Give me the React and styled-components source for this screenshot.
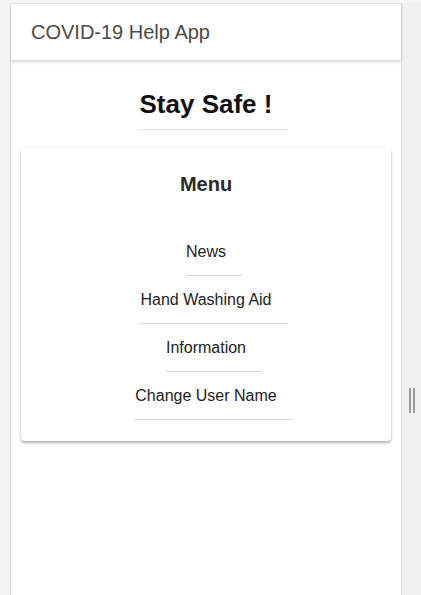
import React from 'react';
import styled, { createGlobalStyle } from 'styled-components';

const menuItems = ['News', 'Hand Washing Aid', 'Information', 'Change User Name'];

function App() {
  return (
    <>
      <GlobalStyle />
      <Page>
        <Gutter />
        <Phone>
          <Header>COVID-19 Help App</Header>
          <Main>
            <Title>Stay Safe !</Title>
            <Card>
              <CardTitle>Menu</CardTitle>
              <MenuList>
                {menuItems.map((item) => (
                  <MenuItem key={item}>{item}</MenuItem>
                ))}
              </MenuList>
            </Card>
          </Main>
        </Phone>
        <Resizer>
          <Handle>
            <Bar />
            <Bar />
          </Handle>
        </Resizer>
      </Page>
    </>
  );
}

export default App;

const GlobalStyle = createGlobalStyle`
  html, body {
    margin: 0;
    padding: 0;
    height: 100%;
    overflow: hidden;
  }

  body {
    font-family: 'Liberation Sans', Arial, sans-serif;
    background: #f5f5f5;
  }

  #root {
    height: 100%;
  }
`;

const Page = styled.div`
  display: flex;
  height: 100vh;
  padding-top: 3px;
  box-sizing: border-box;
  background: #f5f5f5;
`;

const Gutter = styled.div`
  flex: 0 0 10px;
`;

const Phone = styled.div`
  flex: 0 0 392px;
  box-sizing: border-box;
  display: flex;
  flex-direction: column;
  background: #fff;
  border: 1px solid #e2e2e2;
  border-bottom: none;
`;

const Header = styled.header`
  display: flex;
  align-items: center;
  height: 56px;
  padding-left: 20px;
  font-size: 20px;
  color: #4a4a4a;
  background: #fff;
  box-shadow: 0 2px 3px rgba(0, 0, 0, 0.18);
  position: relative;
  z-index: 1;
`;

const Main = styled.main`
  display: flex;
  flex-direction: column;
  align-items: center;
  padding: 29px 10px 0;
`;

const Title = styled.h1`
  margin: 0 -16px 0 0;
  padding: 0 16px 9px 0;
  font-size: 26px;
  font-weight: bold;
  color: #111;
  border-bottom: 1px solid #dcdcdc;
`;

const Card = styled.section`
  align-self: stretch;
  display: flex;
  flex-direction: column;
  align-items: center;
  margin-top: 18px;
  padding: 25px 0 21px;
  border-radius: 4px;
  background: #fff;
  box-shadow: 0 2px 3px rgba(0, 0, 0, 0.3), 0 0 2px rgba(0, 0, 0, 0.08);
`;

const CardTitle = styled.h2`
  margin: 0 0 32px;
  font-size: 20px;
  font-weight: bold;
  color: #2a2a2a;
`;

const MenuList = styled.nav`
  display: flex;
  flex-direction: column;
  align-items: center;
`;

const MenuItem = styled.a`
  margin-right: -16px;
  padding: 15px 16px 14px 0;
  font-size: 16px;
  line-height: 18px;
  color: #222;
  border-bottom: 1px solid #dcdcdc;
  cursor: pointer;
`;

const Resizer = styled.div`
  flex: 1;
  display: flex;
  justify-content: center;
  padding-top: 385px;
  background: #f0f0f0;
`;

const Handle = styled.div`
  display: flex;
  gap: 2px;
  height: 25px;
`;

const Bar = styled.span`
  width: 2px;
  height: 100%;
  background: #9a9a9a;
`;
